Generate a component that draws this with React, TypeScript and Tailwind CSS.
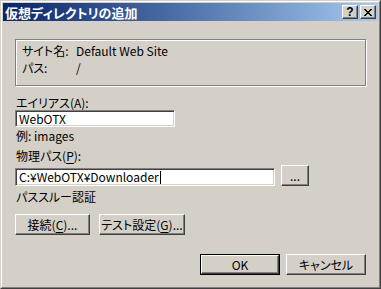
import React from "react";

const font = {
  fontFamily: '"Noto Sans CJK JP", "Noto Sans", sans-serif',
} as React.CSSProperties;

const raised =
  "border border-t-white border-l-white border-r-[#404040] border-b-[#404040] shadow-[inset_-1px_-1px_0_#808080] bg-[#d4d0c8]";
const sunken =
  "border border-t-[#808080] border-l-[#808080] border-r-white border-b-white shadow-[inset_1px_1px_0_#404040,inset_-1px_-1px_0_#d4d0c8] bg-white";

const Key = ({ k }: { k: string }) => (
  <span className="underline underline-offset-[2px] decoration-1">{k}</span>
);

const Label = ({ children, className = "" }: { children: React.ReactNode; className?: string }) => (
  <div className={`h-[12px] leading-[12px] text-[12px] whitespace-nowrap ${className}`}>{children}</div>
);

const Btn = ({ w, children }: { w: string; children: React.ReactNode }) => (
  <div className={`${raised} ${w} h-[21px] flex items-center justify-center text-[12px] leading-[12px] whitespace-nowrap`}>
    {children}
  </div>
);

const CloseGlyph = () => (
  <svg width="8" height="7" viewBox="0 0 8 7" shapeRendering="crispEdges">
    <g fill="#000">
      <rect x="0" y="0" width="2" height="1" />
      <rect x="6" y="0" width="2" height="1" />
      <rect x="1" y="1" width="2" height="1" />
      <rect x="5" y="1" width="2" height="1" />
      <rect x="2" y="2" width="4" height="1" />
      <rect x="3" y="3" width="2" height="1" />
      <rect x="2" y="4" width="4" height="1" />
      <rect x="1" y="5" width="2" height="1" />
      <rect x="5" y="5" width="2" height="1" />
      <rect x="0" y="6" width="2" height="1" />
      <rect x="6" y="6" width="2" height="1" />
    </g>
  </svg>
);

export default function App() {
  return (
    <div
      className="w-[381px] h-[289px] border border-t-[#d4d0c8] border-l-[#d4d0c8] border-r-[#404040] border-b-[#404040] bg-[#d4d0c8] text-black [font-feature-settings:'palt']"
      style={font}
    >
      <div className="w-full h-full border border-t-white border-l-white border-r-[#808080] border-b-[#808080] p-px flex flex-col">
        {/* title bar */}
        <div className="h-[18px] flex items-center bg-gradient-to-r from-[#0a246a] to-[#a6caf0] pl-[2px] pr-[2px]">
          <div className="flex-1 text-white font-bold text-[13px] leading-[13px] whitespace-nowrap">
            仮想ディレクトリの追加
          </div>
          <div className={`${raised} w-[16px] h-[14px] flex items-center justify-center`}>
            <span className="font-bold text-[12px] leading-[12px] text-black" style={{ fontFamily: '"Liberation Sans", sans-serif' }}>?</span>
          </div>
          <div className={`${raised} w-[16px] h-[14px] ml-[2px] flex items-center justify-center`}>
            <CloseGlyph />
          </div>
        </div>

        {/* content */}
        <div className="flex flex-col pl-[12px] pr-[12px]">
          <div className="mt-[18px] h-[47px] border border-[#808080] shadow-[1px_1px_0_#fff,inset_1px_1px_0_#fff] pl-[6px] pt-[2px]">
            <div className="flex h-[17px] items-center text-[12px] leading-[12px]">
              <span className="w-[54px]">サイト名:</span>
              <span>Default Web Site</span>
            </div>
            <div className="flex h-[17px] items-center text-[12px] leading-[12px]">
              <span className="w-[54px]">パス:</span>
              <span>/</span>
            </div>
          </div>

          <Label className="mt-[11px] pl-px">
            エイリアス(<Key k="A" />):
          </Label>
          <div className={`${sunken} mt-px w-[160px] h-[17px] flex items-center pl-[3px] text-[12px] leading-[12px]`}>
            WebOTX
          </div>
          <Label className="mt-[3px] pl-px">例: images</Label>

          <Label className="mt-[8px] pl-px">
            物理パス(<Key k="P" />):
          </Label>
          <div className="mt-[3px] flex items-end gap-[6px]">
            <div className={`${sunken} w-[260px] h-[18px] flex items-center pl-[3px] text-[12px] leading-[12px]`}>
              C:¥WebOTX¥Downloader
              <span className="ml-px w-px h-[13px] bg-black" />
            </div>
            <Btn w="w-[28px]">...</Btn>
          </div>
          <Label className="mt-[5px] pl-px">パススルー認証</Label>

          <div className="mt-[11px] flex gap-[9px]">
            <Btn w="w-[75px]">
              接続(<Key k="C" />)...
            </Btn>
            <Btn w="w-[86px]">
              テスト設定(<Key k="G" />)...
            </Btn>
          </div>

          <div className="mt-[19px] flex justify-end gap-[6px]">
            <div className="border border-black w-[80px] h-[21px]">
              <div className={`${raised} w-full h-full flex items-center justify-center text-[12px] leading-[12px]`}>OK</div>
            </div>
            <Btn w="w-[80px]">キャンセル</Btn>
          </div>
        </div>
      </div>
    </div>
  );
}
